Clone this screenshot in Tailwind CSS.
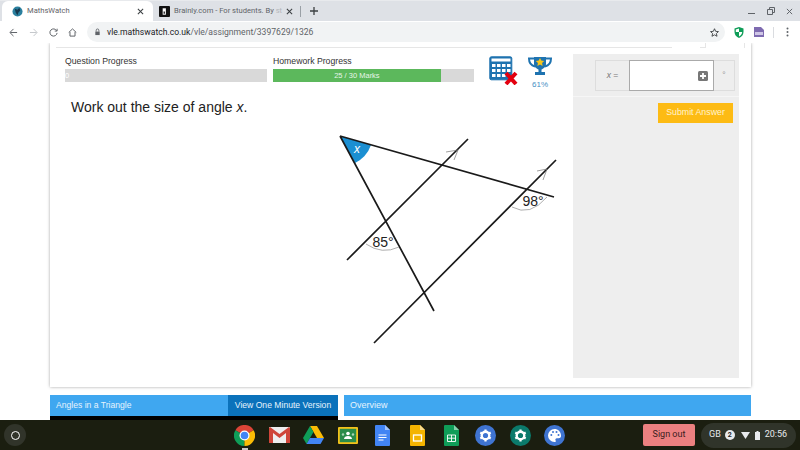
<!DOCTYPE html>
<html lang="en">
<head>
    <meta charset="UTF-8">
    <meta name="viewport" content="width=device-width, initial-scale=1.0">
    <title>MathsWatch</title>
    <script src="https://cdn.jsdelivr.net/npm/@tailwindcss/browser@4"></script>
</head>
<body class="bg-white">
<div class="w-[800px] h-[450px] overflow-hidden flex flex-col font-['Roboto',sans-serif] bg-white">

    <!-- tab strip -->
    <div class="h-[21px] shrink-0 bg-[#dee1e6] flex items-end pl-[2px] border-t border-[#e8eaed]">
        <div class="w-[151px] h-[20px] bg-white rounded-t-[6px] flex items-center pl-[10px] pr-[9px] text-[#5f6368] text-[7.6px]">
            <svg class="w-[11px] h-[11px] mr-[4px]" viewBox="0 0 12 12"><circle cx="6" cy="6" r="5.5" fill="#2a7f9e"/><path d="M3 3l3 1 2-2 1 3-2 2-1 3-2-3z" fill="#16394f"/></svg>
            <span>MathsWatch</span>
            <svg class="w-[7px] h-[7px] ml-auto" viewBox="0 0 8 8"><path d="M1 1l6 6M7 1L1 7" stroke="#3c4043" stroke-width="1.2"/></svg>
        </div>
        <div class="w-[147px] h-[20px] flex items-center pl-[6px] pr-[7px] text-[#5f6368] text-[7.6px]">
            <svg class="w-[11px] h-[11px] mr-[4px] shrink-0" viewBox="0 0 12 12"><rect width="12" height="12" rx="1" fill="#111"/><path d="M4 2.5h3.500v7H4z" fill="#fff"/><path d="M5 6h1.400v2.400H5z" fill="#111"/></svg>
            <span class="whitespace-nowrap">Brainly.com - For students. By <span class="text-[#b4b7bb]">st</span></span>
            <svg class="w-[7px] h-[7px] ml-auto" viewBox="0 0 8 8"><path d="M1 1l6 6M7 1L1 7" stroke="#3c4043" stroke-width="1.2"/></svg>
        </div>
        <div class="w-px h-[11px] bg-[#9aa0a6] mb-[4px]"></div>
        <svg class="w-[8px] h-[8px] ml-[9px] mb-[6px]" viewBox="0 0 8 8"><path d="M4 0v8M0 4h8" stroke="#3c4043" stroke-width="1.3"/></svg>
        <div class="ml-auto flex items-center gap-[11px] pr-[7px] h-[20px]">
            <svg class="w-[8px] h-[8px]" viewBox="0 0 8 8"><path d="M0 6.500h7" stroke="#5f6368" stroke-width="1"/></svg>
            <svg class="w-[8px] h-[8px]" viewBox="0 0 8 8"><path d="M2.500 2.500V.5h5v5H5.500M.5 2.500h5v5h-5z" fill="none" stroke="#5f6368" stroke-width="1"/></svg>
            <svg class="w-[7px] h-[7px]" viewBox="0 0 8 8"><path d="M1 1l6 6M7 1L1 7" stroke="#5f6368" stroke-width="1.100"/></svg>
        </div>
    </div>

    <!-- toolbar -->
    <div class="relative z-10 h-[22px] shrink-0 bg-white flex items-center pl-[9px]">
        <svg class="w-[9px] h-[9px]" viewBox="0 0 10 10"><path d="M9 5H1.500M5 1L1 5l4 4" fill="none" stroke="#5f6368" stroke-width="1.100"/></svg>
        <svg class="w-[9px] h-[9px] ml-[11px]" viewBox="0 0 10 10"><path d="M1 5h7.500M5 1l4 4-4 4" fill="none" stroke="#c4c7cb" stroke-width="1.100"/></svg>
        <svg class="w-[9px] h-[9px] ml-[11px]" viewBox="0 0 10 10"><path d="M8.500 3A4 4 0 1 0 9 5.500M9 .8V3.400H6.400" fill="none" stroke="#5f6368" stroke-width="1.100"/></svg>
        <svg class="w-[9px] h-[9px] ml-[10px]" viewBox="0 0 10 10"><path d="M.8 5L5 1l4.200 4M2.200 4.500V9h5.600V4.500" fill="none" stroke="#5f6368" stroke-width="1.100"/></svg>
        <div class="ml-[10px] w-[638px] h-[20px] bg-[#f1f3f4] rounded-full flex items-center pl-[7px] pr-[6px] text-[8.6px]">
            <svg class="w-[7px] h-[8px] mr-[6px]" viewBox="0 0 8 8"><path d="M1.500 3.500h5V7.500h-5z" fill="#5f6368"/><path d="M2.500 3.500V2a1.500 1.500 0 0 1 3 0v1.500" fill="none" stroke="#5f6368"/></svg>
            <span class="text-[#202124]">vle.mathswatch.co.uk</span><span class="text-[#5f6368]">/vle/assignment/3397629/1326</span>
            <svg class="w-[9px] h-[9px] ml-auto" viewBox="0 0 10 10"><path d="M5 .8l1.300 2.900 3.100.3-2.300 2.100.7 3.100L5 7.600 2.200 9.200l.7-3.100L.6 4l3.100-.3z" fill="none" stroke="#3c4043" stroke-width="1"/></svg>
        </div>
        <svg class="w-[10px] h-[11px] ml-[9px]" viewBox="0 0 10 11"><path d="M5 0l4.500 1.500V5c0 3-2 5-4.500 6C2.500 10 .5 8 .5 5V1.500z" fill="#0f9d58"/><path d="M5 1.500v3.500H1.800V2.500zM5 5h3.200C8 7 6.600 8.600 5 9.400z" fill="#fff"/></svg>
        <svg class="w-[10px] h-[10px] ml-[10px]" viewBox="0 0 10 10"><path d="M0 0h7l3 3v7H0z" fill="#7e6bb0"/><rect x="1" y="5" width="8" height="3" fill="#cfc6e6"/></svg>
        <div class="w-px h-[11px] bg-[#dadce0] ml-[9px]"></div>
        <svg class="w-[3px] h-[10px] ml-[12px]" viewBox="0 0 3 10"><circle cx="1.500" cy="1.500" r="1" fill="#5f6368"/><circle cx="1.500" cy="5" r="1" fill="#5f6368"/><circle cx="1.500" cy="8.500" r="1" fill="#5f6368"/></svg>
    </div>

    <!-- page -->
    <div class="flex-1 min-h-0 flex flex-col pl-[50px] font-['Liberation_Sans',sans-serif]">
        <div class="w-[701px] h-[344px] shrink-0 bg-white shadow-[0_0_3px_rgba(0,0,0,0.35)] flex flex-col">
            <!-- nav tabs remnant -->
            <div class="h-[5px] shrink-0 ml-[6px] mr-[6px] flex border-b border-[#e6e6e6]">
                <div class="w-[616px]"></div>
                <div class="w-[28px] h-[5px] bg-white"></div>
                <div class="w-[5px]"></div>
                <div class="w-[40px] h-[5px] border-x border-[#e6e6e6] bg-white"></div>
            </div>
            <div class="flex flex-1 min-h-0 pt-[6px]">
                <!-- question -->
                <div class="w-[523px] shrink-0 flex flex-col">
                    <div class="flex pl-[15px] h-[40px]">
                        <div class="w-[202px] mr-[6px] text-[8.7px] text-[#333]">
                            <div class="h-[15px] pt-[2px] leading-[11px]">Question Progress</div>
                            <div class="h-[13px] bg-[#d9d9d9] text-white text-[7.5px] leading-[13px]">0</div>
                        </div>
                        <div class="w-[201px] text-[8.7px] text-[#333]">
                            <div class="h-[15px] pt-[2px] leading-[11px]">Homework Progress</div>
                            <div class="h-[13px] bg-[#d9d9d9]">
                                <div class="h-[13px] bg-[#5cb85c] text-[#e8f5e8] text-[7.5px] leading-[13px] text-center" style="width: 83.5%">25 / 30 Marks</div>
                            </div>
                        </div>
                        <div class="relative w-[28px] h-[30px] ml-[15px] mt-[2px]">
                            <svg class="w-[29px] h-[29px]" viewBox="0 0 29 29">
                                <rect x="0.800" y="0.800" width="22" height="23" rx="1.500" fill="#1e73b0" stroke="#1e73b0"/>
                                <rect x="2.500" y="2.500" width="19" height="3" fill="#fff"/>
                                <g fill="#fff">
                                    <rect x="3" y="8" width="3.500" height="3"/><rect x="8" y="8" width="3.500" height="3"/><rect x="13" y="8" width="3.500" height="3"/><rect x="18" y="8" width="3.500" height="3"/>
                                    <rect x="3" y="13" width="3.500" height="3"/><rect x="8" y="13" width="3.500" height="3"/><rect x="13" y="13" width="3.500" height="3"/><rect x="18" y="13" width="3.500" height="3"/>
                                    <rect x="3" y="18" width="3.500" height="3"/><rect x="8" y="18" width="3.500" height="3"/><rect x="13" y="18" width="3.500" height="3"/>
                                </g>
                                <path d="M17 17l10 11M27 17L17 28" stroke="#e3000f" stroke-width="4"/>
                            </svg>
                        </div>
                        <div class="w-[26px] ml-[10px] mt-[2px] flex flex-col items-center">
                            <svg class="w-[24px] h-[21px]" viewBox="0 0 24 21">
                                <path d="M6 1h12v7c0 3-3 5-4.500 5.500V16H17v3H7v-3h3.500v-2.500C9 13 6 11 6 8z" fill="#1e73b0"/>
                                <path d="M6 2.500H1c0 4 2 7 6 8M18 2.500h5c0 4-2 7-6 8" fill="none" stroke="#1e73b0" stroke-width="2"/>
                                <path d="M12 2l1.300 2.600 2.900.4-2.100 2 .5 2.900L12 8.500 9.400 9.900l.5-2.900-2.100-2 2.900-.4z" fill="#f5c51b"/>
                            </svg>
                            <div class="text-[8px] leading-[9px] mt-[3px] text-[#3f8fc4]">61%</div>
                        </div>
                    </div>
                    <div class="pl-[21px] pt-[4px] text-[14px] leading-[18px] text-[#222]">Work out the size of angle <i>x</i>.</div>
                    <svg class="mt-[17px] w-[523px] h-[220px]" viewBox="50 133 523 220">
                        <path d="M340 136 L371 145 A32 32 0 0 1 355 163 Z" fill="#1b8fd2"/>
                        <path d="M340 136L554 197M340 136L434 311M347 260L468 139M374 343L556 160" stroke="#1a1a1a" stroke-width="1.700" fill="none"/>
                        <path d="M446 152L458 150L454 160M537 171L547 169L543 180" stroke="#777" stroke-width="0.700" fill="none"/>
                        <path d="M366 244Q382 255 399 247M512 207Q530 217 547 197" stroke="#999" stroke-width="0.800" fill="none"/>
                        <text x="357" y="153" text-anchor="middle" font-size="12" font-style="italic" fill="#fff" font-family="Liberation Sans">x</text>
                        <text x="383" y="247" text-anchor="middle" font-size="14" fill="#222" font-family="Liberation Sans">85°</text>
                        <text x="533" y="206" text-anchor="middle" font-size="14" fill="#222" font-family="Liberation Sans">98°</text>
                    </svg>
                </div>
                <!-- answer panel -->
                <div class="w-[166px] h-[324px] bg-[#eeeeee] flex flex-col">
                    <div class="h-[43px] shrink-0 border-b border-[#f6f6f6] pl-[22px] pt-[6px]">
                        <div class="flex w-[140px] h-[31px] border border-[#dddddd] text-[#777] text-[8.500px]">
                            <div class="w-[33px] flex items-center justify-center"><i>x</i>&nbsp;=</div>
                            <div class="w-[85px] -my-px bg-white border border-[#aaaaaa] flex items-center justify-end pr-[5px]">
                                <svg class="w-[10px] h-[10px]" viewBox="0 0 10 10"><rect width="10" height="10" rx="1.500" fill="#777"/><path d="M5 2v6M2 5h6" stroke="#fff" stroke-width="1.800"/></svg>
                            </div>
                            <div class="flex-1 flex items-center justify-center text-[#999]">°</div>
                        </div>
                    </div>
                    <div class="flex justify-end pr-[6px] pt-[6px]">
                        <button class="w-[75px] h-[20px] bg-[#fdbb14] text-[#fff3cf] text-[8.800px]">Submit Answer</button>
                    </div>
                </div>
            </div>
        </div>
        <!-- bottom panels -->
        <div class="flex mt-[8px] text-[#e6f3fd] text-[8.600px]">
            <div class="w-[288px] flex flex-col bg-black h-[25px]">
                <div class="h-[21px] flex bg-[#3fa7f0] items-center">
                    <span class="pl-[6px]">Angles in a Triangle</span>
                    <span class="ml-auto w-[110px] h-[21px] bg-[#0b72bb] text-center leading-[20px]">View One Minute Version</span>
                </div>
            </div>
            <div class="w-[407px] ml-[6px] h-[21px] bg-[#3fa7f0] pl-[6px] leading-[21px] text-[9px]">Overview</div>
        </div>
    </div>

    <!-- shelf -->
    <div class="h-[30px] shrink-0 bg-[#1b1e10] flex items-center pl-[4px] font-['Roboto',sans-serif]">
        <div class="w-[22px] h-[22px] rounded-full bg-[#31342a] flex items-center justify-center">
            <div class="w-[9px] h-[9px] rounded-full border border-white"></div>
        </div>
        <div class="flex items-center ml-[208px] gap-[13.500px]">
            <div class="relative w-[21px] h-[21px]">
                <svg class="w-[21px] h-[21px]" viewBox="0 0 21 21"><path d="M10.500 10.500L1.400 5.200A10.500 10.500 0 0 1 19.600 5.200z" fill="#db4437"/><path d="M10.500 10.500L1.400 5.200A10.500 10.500 0 0 0 10.500 21z" fill="#0f9d58"/><path d="M10.500 10.500L19.600 5.200A10.500 10.500 0 0 1 10.500 21z" fill="#fbbc05"/><circle cx="10.500" cy="10.500" r="5" fill="#fff"/><circle cx="10.500" cy="10.500" r="3.800" fill="#4285f4"/></svg>
                <div class="absolute left-[8px] top-[23px] w-[6px] h-[2px] bg-[#c8c8c8]"></div>
            </div>
            <svg class="w-[21px] h-[16px]" viewBox="0 0 21 16"><rect width="21" height="16" rx="1" fill="#eeeeee"/><path d="M0 1v15h4V6l6.500 5L17 6v10h4V1l-1-1-9.500 7L1 0z" fill="#cf4539"/></svg>
            <svg class="w-[21px] h-[18px]" viewBox="0 0 21 18"><path d="M7 0h7l7 12h-7z" fill="#fbbc05"/><path d="M7 0L0 12l3.500 6 7-12z" fill="#0f9d58"/><path d="M3.500 18h14l3.500-6H7z" fill="#4285f4"/></svg>
            <svg class="w-[20px] h-[17px]" viewBox="0 0 20 17"><rect width="20" height="17" rx="1" fill="#f2c21a"/><rect x="1.800" y="1.800" width="16.400" height="13.400" fill="#2a8c4a"/><circle cx="10" cy="6.500" r="1.800" fill="#fff"/><path d="M6 12c0-4 8-4 8 0z" fill="#fff"/><circle cx="5" cy="7.500" r="1.200" fill="#a8d5b5"/><circle cx="15" cy="7.500" r="1.200" fill="#a8d5b5"/></svg>
            <svg class="w-[15px] h-[21px] ml-[4px]" viewBox="0 0 15 21"><path d="M1 0h9l5 5v15a1 1 0 0 1-1 1H1a1 1 0 0 1-1-1V1a1 1 0 0 1 1-1z" fill="#4285f4"/><path d="M10 0l5 5h-5z" fill="#a1c2fa"/><path d="M3.500 10h8M3.500 12.500h8M3.500 15h5" stroke="#fff" stroke-width="1"/></svg>
            <svg class="w-[15px] h-[21px] ml-[6.500px]" viewBox="0 0 15 21"><path d="M1 0h9l5 5v15a1 1 0 0 1-1 1H1a1 1 0 0 1-1-1V1a1 1 0 0 1 1-1z" fill="#f4b400"/><path d="M10 0l5 5h-5z" fill="#fadb8a"/><rect x="3.500" y="10" width="8" height="6" fill="none" stroke="#fff" stroke-width="1.300"/></svg>
            <svg class="w-[15px] h-[21px] ml-[5.500px]" viewBox="0 0 15 21"><path d="M1 0h9l5 5v15a1 1 0 0 1-1 1H1a1 1 0 0 1-1-1V1a1 1 0 0 1 1-1z" fill="#0f9d58"/><path d="M10 0l5 5h-5z" fill="#87ceac"/><path d="M3.500 10h8v6.500h-8zM3.500 13.200h8M7.500 10v6.500" fill="none" stroke="#fff" stroke-width="0.900"/></svg>
            <svg class="w-[21px] h-[21px] ml-[2.500px]" viewBox="0 0 21 21"><circle cx="10.500" cy="10.500" r="10.500" fill="#3f74d1"/><circle cx="10.500" cy="10.500" r="3.800" fill="none" stroke="#fff" stroke-width="2.400"/><path d="M10.500 4.500v3M10.500 13.500v3M5.300 7.500l2.600 1.500M13.100 12l2.600 1.500M5.300 13.500l2.600-1.500M13.100 9l2.600-1.500" stroke="#fff" stroke-width="2.200"/></svg>
            <svg class="w-[21px] h-[21px]" viewBox="0 0 21 21"><circle cx="10.500" cy="10.500" r="10.500" fill="#0b7a6b"/><circle cx="10.500" cy="10.500" r="3.800" fill="none" stroke="#fff" stroke-width="2.400"/><path d="M10.500 4.500v3M10.500 13.500v3M5.300 7.500l2.600 1.500M13.100 12l2.600 1.500M5.300 13.500l2.600-1.500M13.100 9l2.600-1.500" stroke="#fff" stroke-width="2.200"/></svg>
            <svg class="w-[21px] h-[21px]" viewBox="0 0 21 21"><circle cx="10.500" cy="10.500" r="10.500" fill="#3f74d1"/><path d="M10.500 4a6.500 6.500 0 0 0 0 13c1.500 0 1.500-1 1-1.800-.5-1 .2-2 1.300-2h1.700a2.500 2.500 0 0 0 2.500-2.700C16.800 6.500 14 4 10.500 4z" fill="#fff"/><circle cx="7.300" cy="10" r="1" fill="#3f74d1"/><circle cx="9" cy="7" r="1" fill="#3f74d1"/><circle cx="12.500" cy="7" r="1" fill="#3f74d1"/><circle cx="14.500" cy="10" r="1" fill="#3f74d1"/></svg>
        </div>
        <div class="ml-[78px] w-[52px] h-[22px] bg-[#ec8080] rounded-[2px] flex items-center justify-center text-[#3a1d1d] text-[9px]">Sign out</div>
        <div class="ml-[6px] w-[95px] h-[25px] bg-[#30342a] rounded-full flex items-center pl-[8px] text-[#e8eaed] text-[9px]">
            <span>GB</span>
            <span class="ml-[4px] w-[10px] h-[10px] rounded-full bg-[#e8eaed] text-[#222] text-[7px] leading-[10px] text-center font-bold">2</span>
            <svg class="w-[9px] h-[7px] ml-[6px]" viewBox="0 0 9 7"><path d="M0 0h9L4.500 7z" fill="#e8eaed"/></svg>
            <svg class="w-[5px] h-[9px] ml-[5px]" viewBox="0 0 5 9"><path d="M1.500 0h2v1H5v8H0V1h1.500z" fill="#e8eaed"/></svg>
            <span class="ml-[5px]">20:56</span>
        </div>
    </div>
</div>
</body>
</html>
